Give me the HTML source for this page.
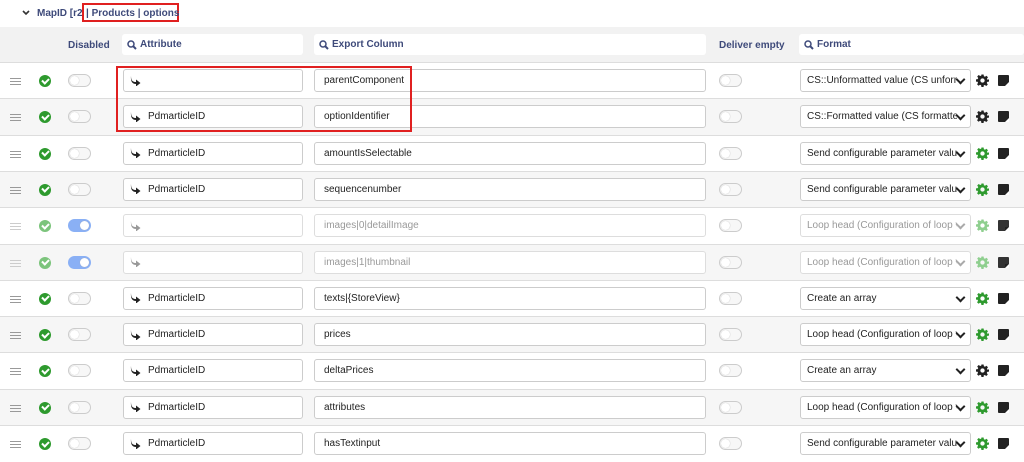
<!DOCTYPE html><html><head><style>
body{margin:0;width:1024px;height:462px;overflow:hidden;background:#fff;font-family:"Liberation Sans",sans-serif;font-size:10px;color:#222;position:relative}
.top{position:absolute;left:0;top:0;width:1024px;height:27px;border-bottom:1px solid #ddd;background:#fff}
.hdr{position:absolute;left:0;top:27px;width:1024px;height:35px;background:#f2f2f2}
.hl{position:absolute;font-weight:bold;color:#3e4a7a;font-size:10px}
.hin{position:absolute;top:34px;height:21px;background:#fff;border-radius:3px;font-weight:bold;color:#3e4a7a;box-sizing:border-box;display:flex;align-items:center;padding-left:5px}
.hin svg{margin-right:3px}
.row{position:absolute;left:0;width:1024px;height:37px;border-top:1px solid #ddd;box-sizing:border-box}
.row.g{background:#f6f6f6}
.drag{position:absolute;left:10px;top:15px;width:11px;height:5px;border-top:1px solid #999;border-bottom:1px solid #999}
.drag:after{content:"";position:absolute;left:0;top:2px;width:11px;border-top:1px solid #999}
.chk{position:absolute;left:39px;top:12px;width:12px;height:12px;border-radius:50%;background:#2e9a2e}
.chk:after{content:"";position:absolute;left:3px;top:2.5px;width:5px;height:3px;border-left:2px solid #fff;border-bottom:2px solid #fff;transform:rotate(-45deg)}
.tg{position:absolute;left:68px;top:11px;width:21px;height:11px;border:1px solid #ccc;border-radius:7px;background:#f7f7f7}
.tg:after{content:"";position:absolute;left:1px;top:1px;width:9px;height:9px;border-radius:50%;background:#fff;box-shadow:0 0 1px #aaa}
.tg.on{background:#8ab0f5;border-color:#8ab0f5}.tg.on:after{left:11px}
.in{position:absolute;top:6px;height:23px;border:1px solid #ccc;border-radius:3px;background:#fff;box-sizing:border-box;display:flex;align-items:center;padding-left:9px;font-size:10px;white-space:nowrap;overflow:hidden}
.at{left:123px;width:180px;padding-left:6px}
.at svg{margin-right:7px;flex:none}
.ex{left:314px;width:392px}
.sel{left:800px;width:171px;padding-left:6px}
.sel span{display:block;width:150px;overflow:hidden}
.sel i{position:absolute;right:6px;top:6px;width:5px;height:5px;border-right:2px solid #222;border-bottom:2px solid #222;transform:rotate(45deg)}
.gear{position:absolute;left:976px;top:11px}
.note{position:absolute;left:998px;top:12px;width:11px;height:11px;background:#222;border-radius:1px}
.note:after{content:"";position:absolute;right:0;bottom:0;border:2px solid #fff;border-top-color:#222;border-left-color:#222}
.dis .chk{background:#7cc47c}.dis .in{color:#999;border-color:#ddd}.dis .sel i{border-color:#aaa}.dis .drag,.dis .drag:after{border-color:#ccc}.dis .note{background:#333}
</style></head><body>
<div class="top">
<svg style="position:absolute;left:22px;top:10px" width="8" height="6" viewBox="0 0 8 6"><path d="M1 1l3 3 3-3" stroke="#333" stroke-width="1.6" fill="none"/></svg>
<span style="position:absolute;left:37px;top:8px;font-weight:bold;color:#3e4a7a">MapID [r2</span>
<div style="position:absolute;left:82px;top:3px;width:97px;height:19px;border:2px solid #e02020;box-sizing:border-box"></div>
<span style="position:absolute;left:86px;top:8px;font-weight:bold;color:#3e4a7a">| Products | options</span>
</div>
<div class="hdr"></div>
<span class="hl" style="left:68px;top:40px">Disabled</span>
<div class="hin" style="left:122px;width:181px"><svg width="10" height="10" viewBox="0 0 10 10"><circle cx="4" cy="4" r="3" stroke="#3e4a7a" stroke-width="1.5" fill="none"/><path d="M6.2 6.2L9 9" stroke="#3e4a7a" stroke-width="2"/></svg>Attribute</div>
<div class="hin" style="left:314px;width:392px"><svg width="10" height="10" viewBox="0 0 10 10"><circle cx="4" cy="4" r="3" stroke="#3e4a7a" stroke-width="1.5" fill="none"/><path d="M6.2 6.2L9 9" stroke="#3e4a7a" stroke-width="2"/></svg>Export Column</div>
<span class="hl" style="left:719px;top:40px">Deliver empty</span>
<div class="hin" style="left:799px;width:225px"><svg width="10" height="10" viewBox="0 0 10 10"><circle cx="4" cy="4" r="3" stroke="#3e4a7a" stroke-width="1.5" fill="none"/><path d="M6.2 6.2L9 9" stroke="#3e4a7a" stroke-width="2"/></svg>Format</div>
<div id="rows"></div>
<div style="position:absolute;left:116px;top:66px;width:296px;height:66px;border:2px solid #e02020;box-sizing:border-box"></div>
<script>
var d=[["","parentComponent","CS::Unformatted value (CS unformatted)",0,0],
["PdmarticleID","optionIdentifier","CS::Formatted value (CS formatted)",0,0],
["PdmarticleID","amountIsSelectable","Send configurable parameter value",1,0],
["PdmarticleID","sequencenumber","Send configurable parameter value",1,0],
["","images|0|detailImage","Loop head (Configuration of loop values)",2,1],
["","images|1|thumbnail","Loop head (Configuration of loop values)",2,1],
["PdmarticleID","texts|{StoreView}","Create an array",1,0],
["PdmarticleID","prices","Loop head (Configuration of loop values)",1,0],
["PdmarticleID","deltaPrices","Create an array",0,0],
["PdmarticleID","attributes","Loop head (Configuration of loop values)",1,0],
["PdmarticleID","hasTextinput","Send configurable parameter value",1,0]];
var h="";d.forEach(function(r,i){var t=62+i*36.3;var gc=["#222","#2e9a2e","#8fcf8f"][r[3]];var ac=r[4]?"#999":"#222";
var gear='<svg class="gear" width="13" height="13" viewBox="0 0 24 24"><path fill="'+gc+'" d="M10 1h4l.6 3.2 2 .9 2.7-1.9 2.8 2.8-1.9 2.7.9 2L24 10v4l-3.2.6-.9 2 1.9 2.7-2.8 2.8-2.7-1.9-2 .9L14 24h-4l-.6-3.2-2-.9-2.7 1.9-2.8-2.8 1.9-2.7-.9-2L0 14v-4l3.2-.6.9-2L2.2 4.7 5 1.9l2.7 1.9 2-.9zM12 8a4 4 0 100 8 4 4 0 000-8z"/></svg>';
h+='<div class="row'+(i%2?' g':'')+(r[4]?' dis':'')+'" style="top:'+t+'px"><div class="drag"></div><div class="chk"></div><div class="tg'+(r[4]?' on':'')+'"></div><div class="in at"><svg width="11" height="10" viewBox="0 0 11 10"><path d="M1 0C1 5 3 6 6 6V3.5l4.5 3.5L6 10.5V8C2 8 .5 5 1 0z" fill="'+ac+'"/></svg>'+r[0]+'</div><div class="in ex">'+r[1]+'</div><div class="tg" style="left:719px"></div><div class="in sel"><span>'+r[2]+'</span><i></i></div>'+gear+'<div class="note"></div></div>';});
document.getElementById("rows").innerHTML=h;
</script>
</body></html>
